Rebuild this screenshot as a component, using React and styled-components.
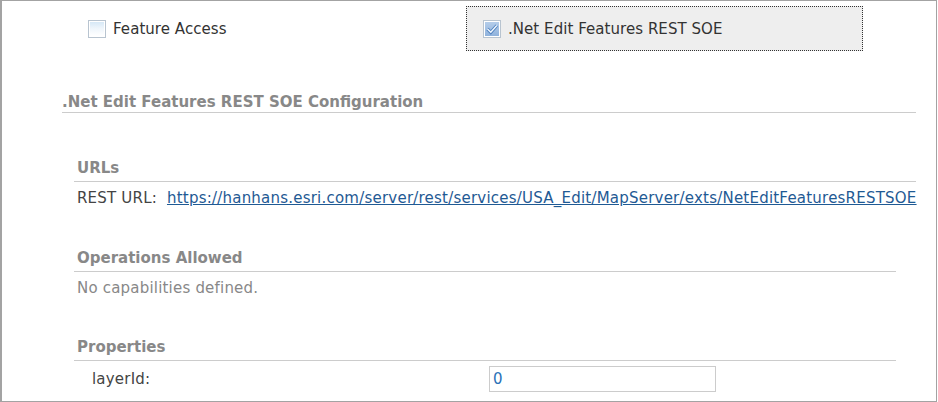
import React from "react";
import styled, { createGlobalStyle } from "styled-components";

const GlobalStyle = createGlobalStyle`
  html, body {
    margin: 0;
    padding: 0;
    background: #ffffff;
  }
  body {
    font-family: "DejaVu Sans", Verdana, sans-serif;
    font-size: 15px;
    color: #444444;
  }
`;

function CheckBox({ checked }) {
  const id = checked ? "cbOn" : "cbOff";
  return (
    <CheckIcon width="18" height="18" viewBox="0 0 18 18">
      <defs>
        <linearGradient id={id} x1="0" y1="0" x2="0" y2="1">
          {checked ? (
            <>
              <stop offset="0" stopColor="#b4cdea" />
              <stop offset="1" stopColor="#8fb2dc" />
            </>
          ) : (
            <>
              <stop offset="0" stopColor="#d6e8f6" />
              <stop offset="0.45" stopColor="#eef5fb" />
              <stop offset="1" stopColor="#ffffff" />
            </>
          )}
        </linearGradient>
      </defs>
      <rect x="0.5" y="0.5" width="17" height="17" fill="#ffffff" stroke="#b8c4d0" />
      <rect x="2" y="2" width="14" height="14" fill={`url(#${id})`} />
      {checked && (
        <>
          <path d="M4.5 9 L7.8 12.3 L13.8 5.5" fill="none" stroke="#4f82c0" strokeWidth="3.2" />
          <path d="M4.5 9 L7.8 12.3 L13.8 5.5" fill="none" stroke="#f2f7fd" strokeWidth="1.4" />
        </>
      )}
    </CheckIcon>
  );
}

export default function App() {
  return (
    <>
      <GlobalStyle />
      <Panel>
        <CapabilityRow>
          <CapabilityItem>
            <CheckBox />
            Feature Access
          </CapabilityItem>
          <CapabilityItem focused>
            <CheckBox checked />
            .Net Edit Features REST SOE
          </CapabilityItem>
        </CapabilityRow>

        <Config>
          <ConfigTitle>.Net Edit Features REST SOE Configuration</ConfigTitle>

          <Section wide gap={46}>
            <SectionTitle>URLs</SectionTitle>
            <Line>
              REST URL:
              <Link href="#">
                https://hanhans.esri.com/server/rest/services/USA_Edit/MapServer/exts/NetEditFeaturesRESTSOE
              </Link>
            </Line>
          </Section>

          <Section gap={42}>
            <SectionTitle>Operations Allowed</SectionTitle>
            <Line muted>No capabilities defined.</Line>
          </Section>

          <Section gap={41}>
            <SectionTitle>Properties</SectionTitle>
            <PropRow>
              <PropLabel>layerId:</PropLabel>
              <PropInput defaultValue="0" />
            </PropRow>
          </Section>
        </Config>
      </Panel>
    </>
  );
}

const Panel = styled.div`
  box-sizing: border-box;
  width: 937px;
  height: 402px;
  border: 1px solid #a3a3a3;
  border-left-width: 2px;
  overflow: hidden;
`;

const CapabilityRow = styled.div`
  display: grid;
  grid-template-columns: 378px 397px;
  align-items: center;
  padding: 5px 0 0 86px;
`;

const CapabilityItem = styled.div`
  box-sizing: border-box;
  display: flex;
  align-items: center;
  column-gap: 7px;
  height: 45px;
  white-space: nowrap;
  color: #333333;
  letter-spacing: 0.05px;
  ${({ focused }) =>
    focused
      ? `
    padding-left: 16px;
    background: #eeeeee;
    border: 1px dotted #333333;
  `
      : ""}
`;

const CheckIcon = styled.svg`
  flex: none;
  display: block;
`;

const Config = styled.div`
  padding: 42px 0 0 60px;
`;

const ConfigTitle = styled.h2`
  width: 854px;
  margin: 0;
  font-size: 15px;
  line-height: 18px;
  font-weight: bold;
  color: #888888;
  padding-bottom: 1px;
  border-bottom: 1px solid #cccccc;
`;

const Section = styled.div`
  margin: ${({ gap }) => gap}px 0 0 12px;
  width: ${({ wide }) => (wide ? "842px" : "822px")};
`;

const SectionTitle = styled.h3`
  margin: 0;
  padding: 0 0 4px 3px;
  font-size: 15px;
  line-height: 18px;
  font-weight: bold;
  color: #888888;
  border-bottom: 1px solid #cccccc;
`;

const Line = styled.div`
  padding: 7px 0 0 3px;
  line-height: 18px;
  white-space: nowrap;
  letter-spacing: 0.2px;
  color: ${({ muted }) => (muted ? "#888888" : "#444444")};
`;

const Link = styled.a`
  margin-left: 10px;
  color: #1f5a94;
  text-decoration: underline;
  letter-spacing: 0.22px;
`;

const PropRow = styled.div`
  display: grid;
  grid-template-columns: 397px 227px;
  align-items: center;
  padding: 5px 0 0 18px;
`;

const PropLabel = styled.span`
  color: #444444;
  letter-spacing: 0.2px;
`;

const PropInput = styled.input`
  box-sizing: border-box;
  width: 227px;
  height: 26px;
  border: 1px solid #cccccc;
  padding: 0 3px;
  font-family: "DejaVu Sans", Verdana, sans-serif;
  font-size: 15px;
  color: #2a72b8;
  outline: none;
`;
